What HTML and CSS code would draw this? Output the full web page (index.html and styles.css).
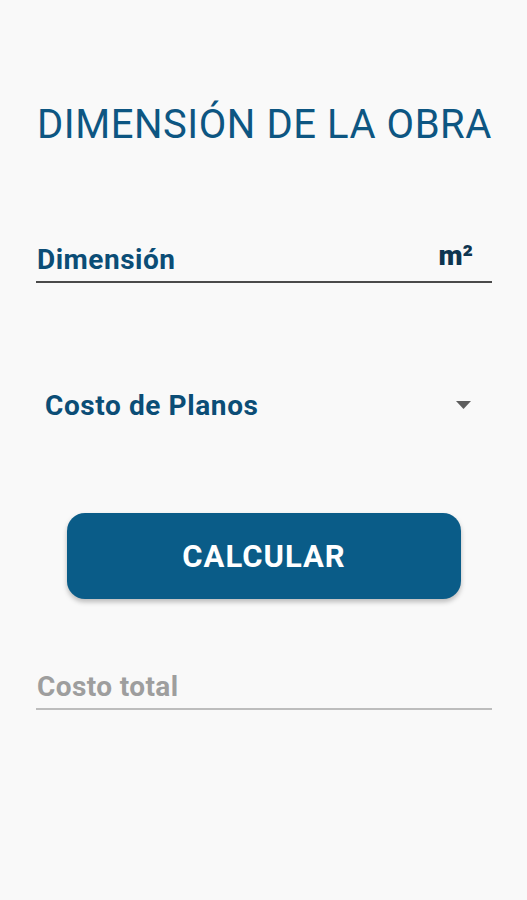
FILE: index.html
```html
<!DOCTYPE html>
<html lang="es">
<head>
  <meta charset="UTF-8" />
  <meta name="viewport" content="width=device-width, initial-scale=1.0"/>
  <title>Dimensión de la obra</title>
  <link rel="stylesheet" href="styles.css">
</head>
<body>

<div class="screen">
  <h1 class="title">DIMENSIÓN DE LA OBRA</h1>

  <div class="field field-dim">
    <span class="field-label">Dimensión</span>
    <span class="unit">m²</span>
  </div>

  <div class="select">
    <span class="select-label">Costo de Planos</span>
    <svg class="caret" width="15" height="8" viewBox="0 0 15 8"><path d="M0 0 L15 0 L7.5 8 Z" fill="#5e5e5e"/></svg>
  </div>

  <button class="btn">CALCULAR</button>

  <div class="field field-total">
    <span class="field-label">Costo total</span>
  </div>
</div>

</body>
</html>
```

FILE: styles.css
```css
* { box-sizing: border-box; margin: 0; padding: 0; }
body { background: #f9f9f9; font-family: Roboto, "Noto Sans", sans-serif; }
.screen { width: 527px; height: 900px; padding: 100px 35px 0 36px; overflow: hidden; }

.title {
  font-weight: 400; font-size: 40px; letter-spacing: 0.55px; color: #0d5682;
  line-height: 50px; padding-left: 1px; white-space: nowrap;
}

.field {
  display: flex; align-items: flex-end; justify-content: space-between;
  border-bottom: 2px solid #4a4a4a; padding: 0 1px 6px 1px;
}
.field-dim { margin-top: 83px; height: 50px; }
.field-label { font-size: 28px; font-weight: 700; letter-spacing: 0.5px; color: #0b4d76; line-height: 30px; }
.unit {
  font-size: 28px; font-weight: 900; color: #0e3550; line-height: 30px;
  align-self: flex-start; margin-top: 8px; margin-right: 18px;
}

.select {
  display: flex; align-items: center; justify-content: space-between;
  margin-top: 102px; height: 40px; padding: 0 21px 0 9px;
}
.select-label { font-size: 28px; font-weight: 700; letter-spacing: 0.6px; color: #0b4d76; }

.btn {
  display: block; width: 394px; height: 86px; margin: 88px 0 0 31px;
  background: #0a5c88; color: #fff; border: none; border-radius: 18px;
  font-family: Roboto, sans-serif; font-size: 31px; font-weight: 700; letter-spacing: 1px;
  box-shadow: 0 3px 5px rgba(0,0,0,0.25);
}

.field-total { margin-top: 67px; height: 44px; border-bottom-color: #bdbdbd; }
.field-total .field-label { color: #9e9e9e; letter-spacing: 0.4px; }
```
